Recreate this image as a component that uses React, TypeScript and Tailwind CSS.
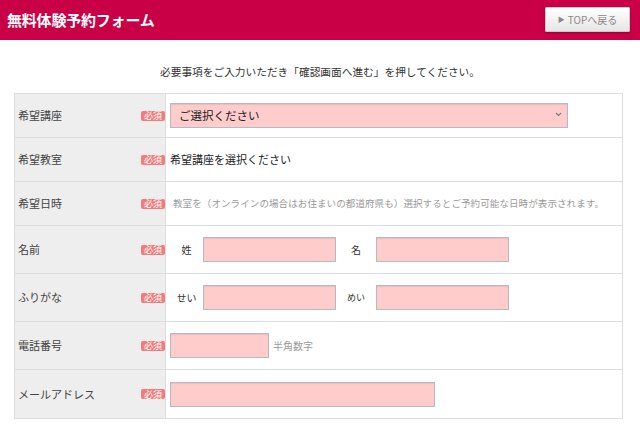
import React from 'react';

const font = { fontFamily: '"Noto Sans CJK JP", "Noto Sans", sans-serif' };

const Badge = () => (
  <span className="flex h-[10px] w-[24px] shrink-0 items-center justify-center rounded-[2px] bg-[#f47b7b] text-[9px] leading-none text-white">
    必須
  </span>
);

const inputCls =
  'h-[25px] border border-[#b9b9c4] bg-[#ffcccc] shadow-[inset_0_1px_1px_rgba(0,0,0,0.08)] outline-none';

type RowProps = {
  label: string;
  tall?: boolean;
  last?: boolean;
  children: React.ReactNode;
};

const Row = ({ label, tall, last, children }: RowProps) => (
  <div className={`flex ${tall ? 'h-[48px]' : 'h-[44px]'} ${last ? '' : 'border-b border-[#dddddd]'}`}>
    <div className="flex w-[151px] shrink-0 items-center justify-between border-r border-[#dddddd] bg-[#eeeeee] pl-[3px]">
      <span className="text-[11px] text-[#444]">{label}</span>
      <Badge />
    </div>
    <div className="flex flex-1 items-center pl-[4px]">{children}</div>
  </div>
);

export default function App() {
  return (
    <div className="h-[428px] w-[640px] overflow-hidden bg-white" style={font}>
      {/* Header */}
      <div className="flex h-[40px] items-center justify-between bg-[#c90045] pl-[7px] pr-[10px]">
        <h1 className="text-[15px] font-bold tracking-[-0.2px] text-white">無料体験予約フォーム</h1>
        <button className="mt-[-1px] flex h-[25px] w-[85px] items-center justify-center gap-[3px] rounded-[1px] border border-[#c8c8c8] bg-gradient-to-b from-white to-[#e6e6e6] text-[10px] text-[#888] shadow-[0_1px_2px_rgba(0,0,0,0.25)]">
          <span className="text-[7px]">▶</span>
          <span>TOPへ戻る</span>
        </button>
      </div>

      <p className="mt-[24px] h-[16px] text-center text-[10.7px] leading-[16px] text-[#333]">
        必要事項をご入力いただき「確認画面へ進む」を押してください。
      </p>

      {/* Form table */}
      <div className="ml-[14px] mt-[13px] w-[609px] border border-[#dddddd]">
        <Row label="希望講座">
          <div className={`${inputCls} relative flex h-[21px] w-[398px] items-center pl-[8px]`}>
            <span className="text-[11.5px] text-[#222]">ご選択ください</span>
            <svg className="absolute right-[5px] top-[8px]" width="7" height="5" viewBox="0 0 7 5">
              <path d="M1 1l2.5 2.5L6 1" fill="none" stroke="#777" strokeWidth="1.1" />
            </svg>
          </div>
        </Row>
        <Row label="希望教室">
          <span className="text-[11px] text-[#222]">希望講座を選択ください</span>
        </Row>
        <Row label="希望日時">
          <span className="pl-[3px] text-[9.5px] tracking-[0.1px] text-[#9a9a9a]">
            教室を（オンラインの場合はお住まいの都道府県も）選択するとご予約可能な日時が表示されます。
          </span>
        </Row>
        <Row label="名前" tall>
          <span className="w-[33px] text-center text-[10px] text-[#333]">姓</span>
          <div className={`${inputCls} w-[133px]`} />
          <span className="w-[40px] text-center text-[10px] text-[#333]">名</span>
          <div className={`${inputCls} w-[133px]`} />
        </Row>
        <Row label="ふりがな" tall>
          <span className="w-[33px] text-center text-[10px] text-[#333]">せい</span>
          <div className={`${inputCls} w-[133px]`} />
          <span className="w-[40px] text-center text-[9px] text-[#333]">めい</span>
          <div className={`${inputCls} w-[133px]`} />
        </Row>
        <Row label="電話番号" tall>
          <div className={`${inputCls} w-[99px]`} />
          <span className="pl-[4px] text-[10px] text-[#999]">半角数字</span>
        </Row>
        <Row label="メールアドレス" tall last>
          <div className={`${inputCls} w-[265px]`} />
        </Row>
      </div>
    </div>
  );
}
